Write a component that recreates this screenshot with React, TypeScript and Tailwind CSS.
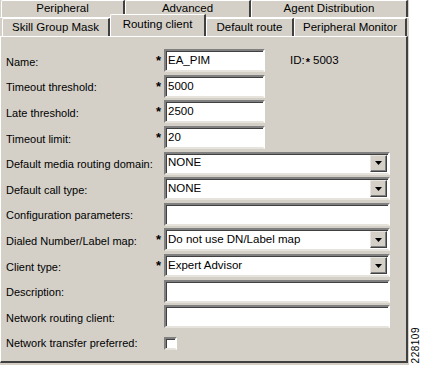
import React from "react";

const font = { fontFamily: '"Liberation Sans", Arial, sans-serif' };

function Tab({ label, w, selected }: { label: string; w: string; selected?: boolean }) {
  return (
    <div
      className={`${w} flex items-center justify-center border-l border-t border-l-white border-t-white border-r-2 border-r-[#404040] rounded-tl-[2px] ${selected ? "relative z-10 -mt-[3px] h-[22px] bg-[#d4d0c8] pb-[2px]" : "h-full"}`}
    >
      <span className="text-[11.5px] leading-none text-black">{label}</span>
    </div>
  );
}

function Input({ w, value, dropdown }: { w: string; value?: string; dropdown?: boolean }) {
  return (
    <div
      className={`${w} h-[23px] bg-white border-2 border-t-[#808080] border-l-[#808080] border-r-white border-b-[#e6e3dc] shadow-[inset_1px_1px_0_#404040] flex items-center justify-between pl-[2px] pr-[0px]`}
    >
      <span className="text-[11.5px] leading-none text-black">{value}</span>
      {dropdown && (
        <div className="w-[17px] h-[17px] mr-[1px] bg-[#d4d0c8] border border-t-[#e8e6e0] border-l-[#e8e6e0] border-r-[#404040] border-b-[#404040] shadow-[inset_-1px_-1px_0_#808080] flex items-center justify-center">
          <svg width="7" height="4" viewBox="0 0 7 4">
            <polygon points="0,0 7,0 3.5,4" fill="#000" />
          </svg>
        </div>
      )}
    </div>
  );
}

function Row({
  label,
  star,
  children,
}: {
  label: string;
  star?: boolean;
  children?: React.ReactNode;
}) {
  return (
    <div className="h-[25.6px] flex items-center">
      <div className="w-[152px] pl-[5px] text-[11px] leading-none text-black pt-[3px] whitespace-nowrap">{label}</div>
      <div className="w-[11px] text-[13px] font-bold leading-none text-black pl-[3px]">{star ? "*" : ""}</div>
      {children}
    </div>
  );
}

export default function App() {
  return (
    <div className="w-[423px] h-[365px] bg-white flex overflow-hidden" style={font}>
      <div className="w-[409px] h-[365px] bg-[#d4d0c8] flex flex-col">
        <div className="h-[17px] flex pl-[1px] pr-[1px]">
          <Tab label="Peripheral" w="w-[124px]" />
          <Tab label="Advanced" w="w-[126px]" />
          <Tab label="Agent Distribution" w="w-[157px]" />
        </div>
        <div className="h-[19px] flex items-end pl-[2px] pr-[1px] border-t border-t-white">
          <Tab label="Skill Group Mask" w="w-[108px]" />
          <Tab label="Routing client" w="w-[96px]" selected />
          <Tab label="Default route" w="w-[88px]" />
          <Tab label="Peripheral Monitor" w="w-[113px]" />
        </div>
        <div className="flex-1 border-t border-l border-t-white border-l-white border-r-2 border-r-[#404040] border-b-2 border-b-[#404040] mr-[1px] mb-[2px] pt-[11px]">
          <Row label="Name:" star>
            <Input w="w-[101px]" value="EA_PIM" />
            <div className="ml-[25px] text-[11.5px] leading-none text-black flex items-center">
              ID:<span className="text-[11px] font-bold ml-[1px] mr-[3px] relative top-[2px]">*</span>5003
            </div>
          </Row>
          <Row label="Timeout threshold:" star>
            <Input w="w-[101px]" value="5000" />
          </Row>
          <Row label="Late threshold:" star>
            <Input w="w-[101px]" value="2500" />
          </Row>
          <Row label="Timeout limit:" star>
            <Input w="w-[101px]" value="20" />
          </Row>
          <Row label="Default media routing domain:">
            <Input w="w-[226px]" value="NONE" dropdown />
          </Row>
          <Row label="Default call type:">
            <Input w="w-[226px]" value="NONE" dropdown />
          </Row>
          <Row label="Configuration parameters:">
            <Input w="w-[226px]" />
          </Row>
          <Row label="Dialed Number/Label map:" star>
            <Input w="w-[226px]" value="Do not use DN/Label map" dropdown />
          </Row>
          <Row label="Client type:" star>
            <Input w="w-[226px]" value="Expert Advisor" dropdown />
          </Row>
          <Row label="Description:">
            <Input w="w-[226px]" />
          </Row>
          <Row label="Network routing client:">
            <Input w="w-[226px]" />
          </Row>
          <Row label="Network transfer preferred:">
            <div className="w-[13px] h-[13px] bg-white border-2 border-t-[#808080] border-l-[#808080] border-r-white border-b-[#e6e3dc] shadow-[inset_1px_1px_0_#404040] mt-[2px]" />
          </Row>
        </div>
      </div>
      <div className="flex-1 flex flex-col justify-end items-center pb-[2px]">
        <div className="text-[10px] leading-none text-black [writing-mode:vertical-rl] rotate-180 tracking-[0.5px]">228109</div>
      </div>
    </div>
  );
}
